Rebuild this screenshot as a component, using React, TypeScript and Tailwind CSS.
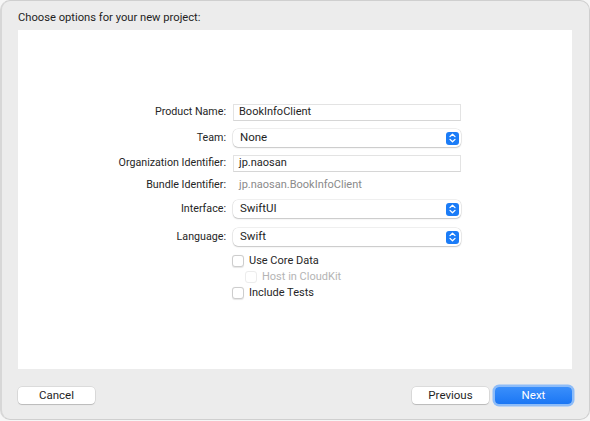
import { ReactNode } from "react"

const font = { fontFamily: "Roboto, 'Liberation Sans', sans-serif" }

function Stepper() {
  return (
    <span className="flex h-[13px] w-[13px] items-center justify-center rounded-[3px] bg-[#1b7cf7]">
      <svg width="7" height="10" viewBox="0 0 7 10" fill="none">
        <path d="M1 3.6 L3.5 1.2 L6 3.6" stroke="white" strokeWidth="1.3" strokeLinecap="round" strokeLinejoin="round" />
        <path d="M1 6.4 L3.5 8.8 L6 6.4" stroke="white" strokeWidth="1.3" strokeLinecap="round" strokeLinejoin="round" />
      </svg>
    </span>
  )
}

function Row({ label, children, className }: { label: string; children: ReactNode; className: string }) {
  return (
    <div className={`flex items-center ${className}`}>
      <div className="w-[215px] pr-[7px] text-right text-[10.7px] text-[#262626]">{label}</div>
      <div className="w-[228px]">{children}</div>
    </div>
  )
}

function TextField({ value }: { value: string }) {
  return (
    <div className="flex h-[17px] items-center border border-[#e3e3e3] border-b-[#d6d6d6] bg-white px-[5px] text-[11px] text-[#1f1f1f]">
      {value}
    </div>
  )
}

function Popup({ value }: { value: string }) {
  return (
    <div className="flex h-[18px] items-center justify-between rounded-[5px] bg-white pl-[7px] pr-[2px] text-[11.5px] text-[#1f1f1f] shadow-[0_0_0_0.5px_rgba(0,0,0,0.12),0_1px_1.5px_rgba(0,0,0,0.18)]">
      <span>{value}</span>
      <Stepper />
    </div>
  )
}

function Check({ label, disabled }: { label: string; disabled?: boolean }) {
  return (
    <div className="flex items-center gap-[5px]">
      <span
        className={`h-[12px] w-[12px] rounded-[3px] bg-white ${
          disabled ? "border border-[#ececec]" : "border border-[#cdcdcd] shadow-[0_0.5px_1px_rgba(0,0,0,0.1)]"
        }`}
      />
      <span className={`text-[11px] ${disabled ? "text-[#b4b4b4]" : "text-[#262626]"}`}>{label}</span>
    </div>
  )
}

export default function App() {
  return (
    <div className="h-[421px] w-[590px] bg-[#f6f6f6]" style={font}>
      <div className="flex h-[420px] w-[590px] flex-col rounded-[10px] border border-[#cfcfcf] border-l-[2px] border-l-[#d7d7d7] bg-[#ececec] pl-[16px] pr-[17px]">
        <div className="pt-[10px] text-[11.2px] leading-[14px] text-[#1f1f1f]">Choose options for your new project:</div>

        <div className="mt-[5px] h-[339px] w-[554px] bg-white pt-[74px]">
          <Row label="Product Name:" className="h-[17px]">
            <TextField value="BookInfoClient" />
          </Row>
          <Row label="Team:" className="mt-[8px] h-[18px]">
            <Popup value="None" />
          </Row>
          <Row label="Organization Identifier:" className="mt-[8px] h-[17px]">
            <TextField value="jp.naosan" />
          </Row>
          <Row label="Bundle Identifier:" className="mt-[5px] h-[17px]">
            <div className="pl-[6px] text-[11px] text-[#8a8a8a]">jp.naosan.BookInfoClient</div>
          </Row>
          <Row label="Interface:" className="mt-[6px] h-[18px]">
            <Popup value="SwiftUI" />
          </Row>
          <Row label="Language:" className="mt-[10px] h-[18px]">
            <Popup value="Swift" />
          </Row>
          <div className="ml-[214px] mt-[7px] flex flex-col">
            <div className="h-[13px]">
              <Check label="Use Core Data" />
            </div>
            <div className="mt-[3px] h-[13px] pl-[13px]">
              <Check label="Host in CloudKit" disabled />
            </div>
            <div className="mt-[3px] h-[13px]">
              <Check label="Include Tests" />
            </div>
          </div>
        </div>

        <div className="mt-[18px] flex items-center">
          <button className="h-[17px] w-[77px] rounded-[4px] bg-white text-[11.5px] text-[#1f1f1f] shadow-[0_0_0_0.5px_rgba(0,0,0,0.14),0_1px_1px_rgba(0,0,0,0.15)]">
            Cancel
          </button>
          <div className="flex-1" />
          <button className="h-[17px] w-[77px] rounded-[4px] bg-white text-[11.5px] text-[#1f1f1f] shadow-[0_0_0_0.5px_rgba(0,0,0,0.14),0_1px_1px_rgba(0,0,0,0.15)]">
            Previous
          </button>
          <button className="ml-[6px] h-[17px] w-[77px] rounded-[4px] bg-gradient-to-b from-[#3a8ffb] to-[#1a76f4] text-[11.5px] text-white ring-[2.5px] ring-[#8dbcf8]">
            Next
          </button>
        </div>
      </div>
    </div>
  )
}
